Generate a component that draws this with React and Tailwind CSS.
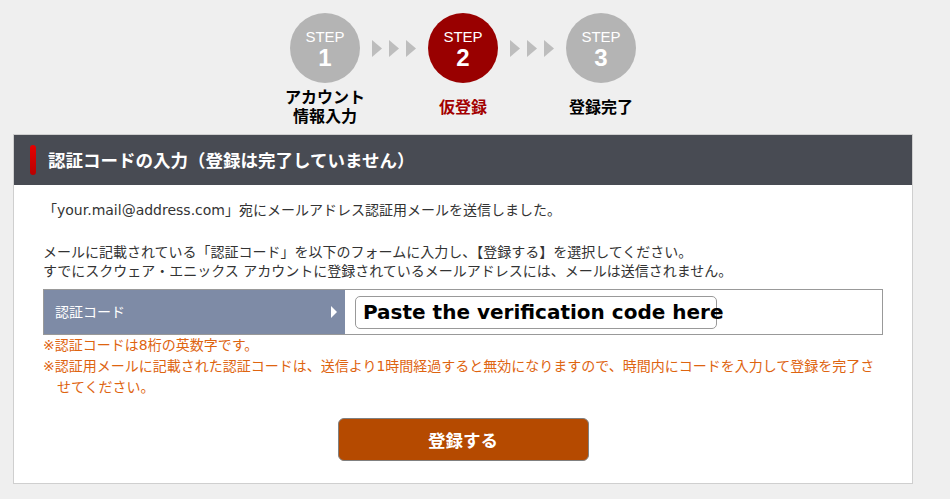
const font = { fontFamily: '"DejaVu Sans", "Noto Sans CJK JP", sans-serif' };

const steps = [
  { n: 1, label: ["アカウント", "情報入力"], active: false },
  { n: 2, label: ["仮登録"], active: true },
  { n: 3, label: ["登録完了"], active: false },
];

function Arrows() {
  return (
    <div className="flex h-[70px] w-[68px] items-center justify-center gap-[7px]">
      {[0, 1, 2].map((i) => (
        <svg key={i} width="10" height="17" viewBox="0 0 10 17">
          <polygon points="0,0 10,8.5 0,17" fill="#bdbdbd" />
        </svg>
      ))}
    </div>
  );
}

function Step({ step }) {
  return (
    <div className="flex w-[70px] flex-col items-center">
      <div
        className={`flex h-[70px] w-[70px] flex-col items-center justify-center rounded-full pt-[3px] text-white ${
          step.active ? "bg-[#990000]" : "bg-[#b4b4b4]"
        }`}
        style={{ fontFamily: '"Liberation Sans", Arial, sans-serif' }}
      >
        <span className="text-[15px] leading-[16px]">STEP</span>
        <span className="text-[24px] font-bold leading-[26px]">{step.n}</span>
      </div>
      <div
        className={`mt-[3px] flex h-[40px] flex-col items-center justify-center whitespace-nowrap text-[16px] font-bold leading-[19px] ${
          step.active ? "text-[#a30000]" : "text-black"
        }`}
        style={{ fontFamily: '"Noto Sans CJK JP", sans-serif' }}
      >
        {step.label.map((l) => (
          <span key={l}>{l}</span>
        ))}
      </div>
    </div>
  );
}

export default function App() {
  return (
    <div className="min-h-[499px] w-[950px] bg-[#efefef]" style={font}>
      <div className="w-[926px] pt-[13px]">
        <div className="flex justify-center">
          <Step step={steps[0]} />
          <Arrows />
          <Step step={steps[1]} />
          <Arrows />
          <Step step={steps[2]} />
        </div>

        <div className="ml-[13px] mt-[8px] w-[900px] border border-[#cfcfcf] bg-white">
          <div className="flex h-[50px] items-center bg-[#484b53] pl-[16px]">
            <span className="h-[30px] w-[6px] rounded-full bg-gradient-to-b from-[#e60000] to-[#b80000]" />
            <h2
              className="ml-[12px] text-[17.5px] font-bold text-white"
              style={{ fontFamily: '"Noto Sans CJK JP", sans-serif' }}
            >
              認証コードの入力（登録は完了していません）
            </h2>
          </div>

          <div className="px-[29px] pb-[22px] pt-[16px] text-[14px] leading-[19px] text-[#333]">
            <p>「your.mail@address.com」宛にメールアドレス認証用メールを送信しました。</p>
            <p className="mt-[23px]">
              メールに記載されている「認証コード」を以下のフォームに入力し、【登録する】を選択してください。
              <br />
              すでにスクウェア・エニックス アカウントに登録されているメールアドレスには、メールは送信されません。
            </p>

            <div className="mt-[8px] flex h-[46px] border border-[#999]">
              <div className="flex w-[301px] items-center justify-between bg-[#7e8ba6] pl-[11px] pr-[8px] text-[14px] text-white">
                <span>認証コード</span>
                <svg width="6" height="12" viewBox="0 0 6 12">
                  <polygon points="0,0 6,6 0,12" fill="#ffffff" />
                </svg>
              </div>
              <div className="flex flex-1 items-center bg-white pl-[10px]">
                <div className="flex h-[33px] w-[362px] items-center overflow-visible whitespace-nowrap rounded-[5px] border border-[#999] pl-[7px] text-[20px] font-bold text-black">
                  Paste the verification code here
                </div>
              </div>
            </div>

            <div className="text-[14px] leading-[21px] text-[#de6410]">
              <p>※認証コードは8桁の英数字です。</p>
              <p className="pl-[1em] -indent-[1em]">
                ※認証用メールに記載された認証コードは、送信より1時間経過すると無効になりますので、時間内にコードを入力して登録を完了させてください。
              </p>
            </div>

            <div className="mt-[20px] flex justify-center">
              <button
                className="h-[43px] w-[251px] rounded-[6px] border border-[#808080] bg-[#b54a00] text-[17.5px] font-bold text-white"
                style={{ fontFamily: '"Noto Sans CJK JP", sans-serif' }}
              >
                登録する
              </button>
            </div>
          </div>
        </div>
      </div>
    </div>
  );
}
